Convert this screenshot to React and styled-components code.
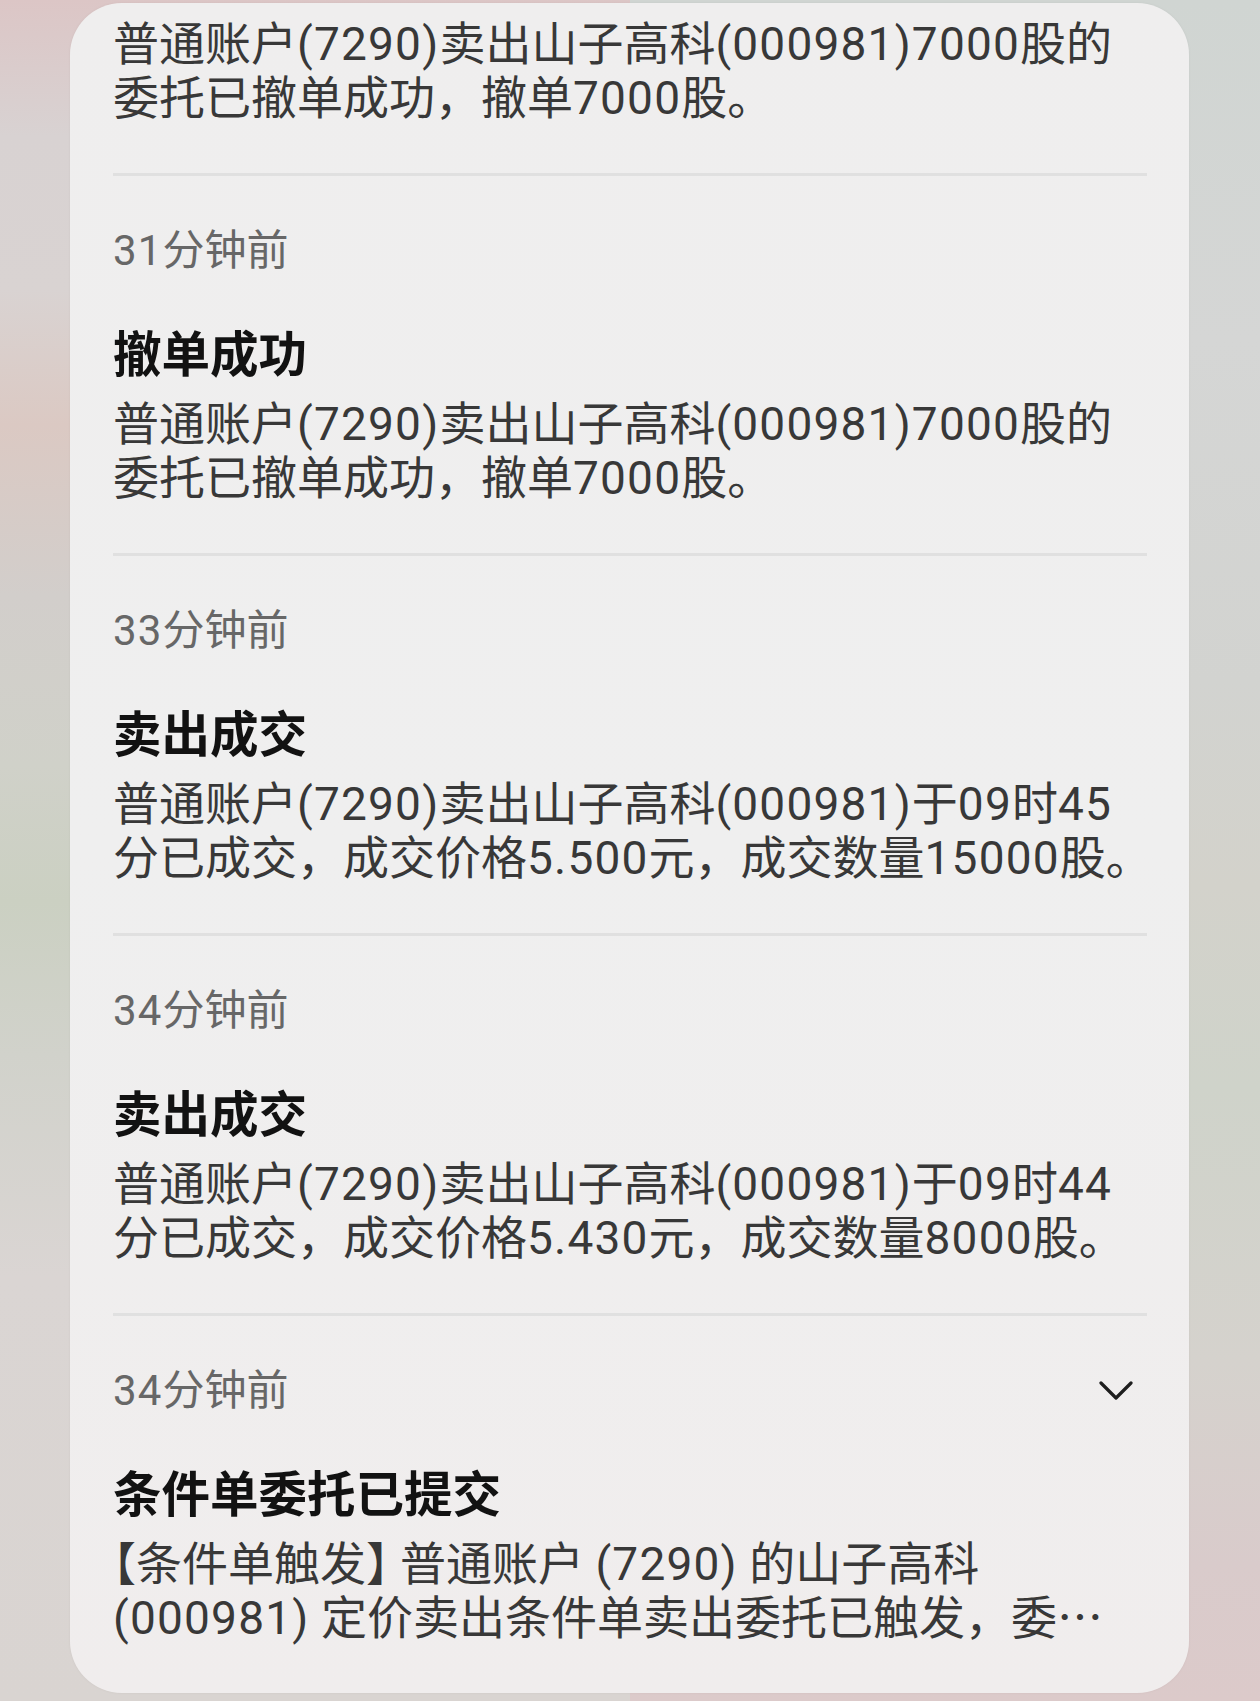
import React from "react";
import styled, { createGlobalStyle } from "styled-components";

const GlobalStyle = createGlobalStyle`
  html, body {
    margin: 0;
    padding: 0;
  }
  body {
    font-family: Roboto, "Noto Sans CJK SC", sans-serif;
    background: #d4d2cf;
  }
`;

const notices = [
  {
    partial: true,
    lines: [
      "普通账户(7290)卖出山子高科(000981)7000股的",
      "委托已撤单成功，撤单7000股。",
    ],
  },
  {
    time: "31分钟前",
    title: "撤单成功",
    lines: [
      "普通账户(7290)卖出山子高科(000981)7000股的",
      "委托已撤单成功，撤单7000股。",
    ],
  },
  {
    time: "33分钟前",
    title: "卖出成交",
    lines: [
      "普通账户(7290)卖出山子高科(000981)于09时45",
      "分已成交，成交价格5.500元，成交数量15000股。",
    ],
  },
  {
    time: "34分钟前",
    title: "卖出成交",
    lines: [
      "普通账户(7290)卖出山子高科(000981)于09时44",
      "分已成交，成交价格5.430元，成交数量8000股。",
    ],
  },
  {
    time: "34分钟前",
    title: "条件单委托已提交",
    expandable: true,
    lines: [
      "【条件单触发】普通账户 (7290) 的山子高科",
      "(000981) 定价卖出条件单卖出委托已触发，委…",
    ],
  },
];

// digits get a touch more room, CJK punctuation keeps the CJK font
const renderLine = (text) =>
  text
    .split(/([0-9().]+|【|】|…)/)
    .filter(Boolean)
    .map((part, k) => {
      if (part === "【") return <Bracket key={k}>【</Bracket>;
      if (part === "】") return <Bracket key={k} $close>】</Bracket>;
      if (part === "…") return <Dots key={k}>…</Dots>;
      if (/^[0-9().]+$/.test(part)) return <Latin key={k}>{part}</Latin>;
      return part;
    });

export default function App() {
  return (
    <>
      <GlobalStyle />
      <Page>
        <Card>
          {notices.map((n, i) => (
            <React.Fragment key={i}>
              {i > 0 && <Divider />}
              <Notice $partial={n.partial}>
                {!n.partial && (
                  <>
                    <TimeRow>
                      <Time>{renderLine(n.time)}</Time>
                      {n.expandable && (
                        <Chevron viewBox="0 0 34 22" aria-hidden="true">
                          <path d="M2 3 L17 18 L32 3" />
                        </Chevron>
                      )}
                    </TimeRow>
                    <Title>{n.title}</Title>
                  </>
                )}
                <Body>
                  {n.lines.map((l, j) => (
                    <Line key={j}>{renderLine(l)}</Line>
                  ))}
                </Body>
              </Notice>
            </React.Fragment>
          ))}
        </Card>
      </Page>
    </>
  );
}

const Page = styled.div`
  box-sizing: border-box;
  width: 1260px;
  height: 1701px;
  padding: 3px 71px 8px 70px;
  background-color: #d4d2cf;
  background-image:
    linear-gradient(
      180deg,
      #dcc6c6 0%,
      #d8d2d2 8%,
      #d9d3d2 17%,
      #dbc9c3 25%,
      #d2cecb 35%,
      #d0d1c9 45%,
      #cbd0c2 53%,
      #d1d2cb 62%,
      #dad5d3 75%,
      #d9d4d1 100%
    ),
    linear-gradient(
      180deg,
      #d0d5d2 0%,
      #d5d6d5 20%,
      #d2d3d0 40%,
      #d3d2cb 52%,
      #cfd3ca 64%,
      #d5d2cd 80%,
      #d9cbcb 92%,
      #dccaca 100%
    );
  background-size: 50% 100%, 50% 100%;
  background-position: left top, right top;
  background-repeat: no-repeat;
  overflow: hidden;
`;

const Card = styled.div`
  box-sizing: border-box;
  height: 100%;
  display: flex;
  flex-direction: column;
  padding: 0 42px 0 43px;
  border-radius: 52px;
  overflow: hidden;
  background: linear-gradient(180deg, #efeeee 0%, #efefef 50%, #f0eded 100%);
  box-shadow: 0 0 3px rgba(0, 0, 0, 0.05);
`;

const Divider = styled.div`
  flex: none;
  height: 3px;
  background: #e0e0e0;
`;

const Notice = styled.div`
  flex: none;
  display: flex;
  flex-direction: column;
  padding: ${(p) => (p.$partial ? "6px 0 48px" : "47px 0 48px")};
`;

const TimeRow = styled.div`
  display: flex;
  align-items: center;
  justify-content: space-between;
  height: 56px;
`;

const Time = styled.span`
  font-size: 42px;
  line-height: 56px;
  color: #676767;
`;

const Chevron = styled.svg`
  width: 34px;
  height: 22px;
  margin-right: 14px;
  fill: none;
  stroke: #1e1e1e;
  stroke-width: 3.2;
  stroke-linecap: round;
  stroke-linejoin: round;
`;

const Title = styled.div`
  margin-top: 44px;
  font-size: 48.5px;
  line-height: 66px;
  height: 66px;
  font-weight: 700;
  color: #121212;
`;

const Body = styled.div`
  margin-top: 8px;
  display: flex;
  flex-direction: column;
`;

const Line = styled.div`
  height: 54px;
  font-size: 46px;
  line-height: 54px;
  color: #383838;
  white-space: nowrap;
`;

const Latin = styled.span`
  letter-spacing: 1.2px;
`;

const Bracket = styled.span`
  font-family: "Noto Sans CJK SC", sans-serif;
  line-height: 0;
  ${(p) =>
    p.$close ? "letter-spacing: -12px;" : 'font-feature-settings: "halt" 1;'}
`;

const Dots = styled.span`
  font-family: "Noto Sans CJK SC", sans-serif;
  line-height: 0;
`;
